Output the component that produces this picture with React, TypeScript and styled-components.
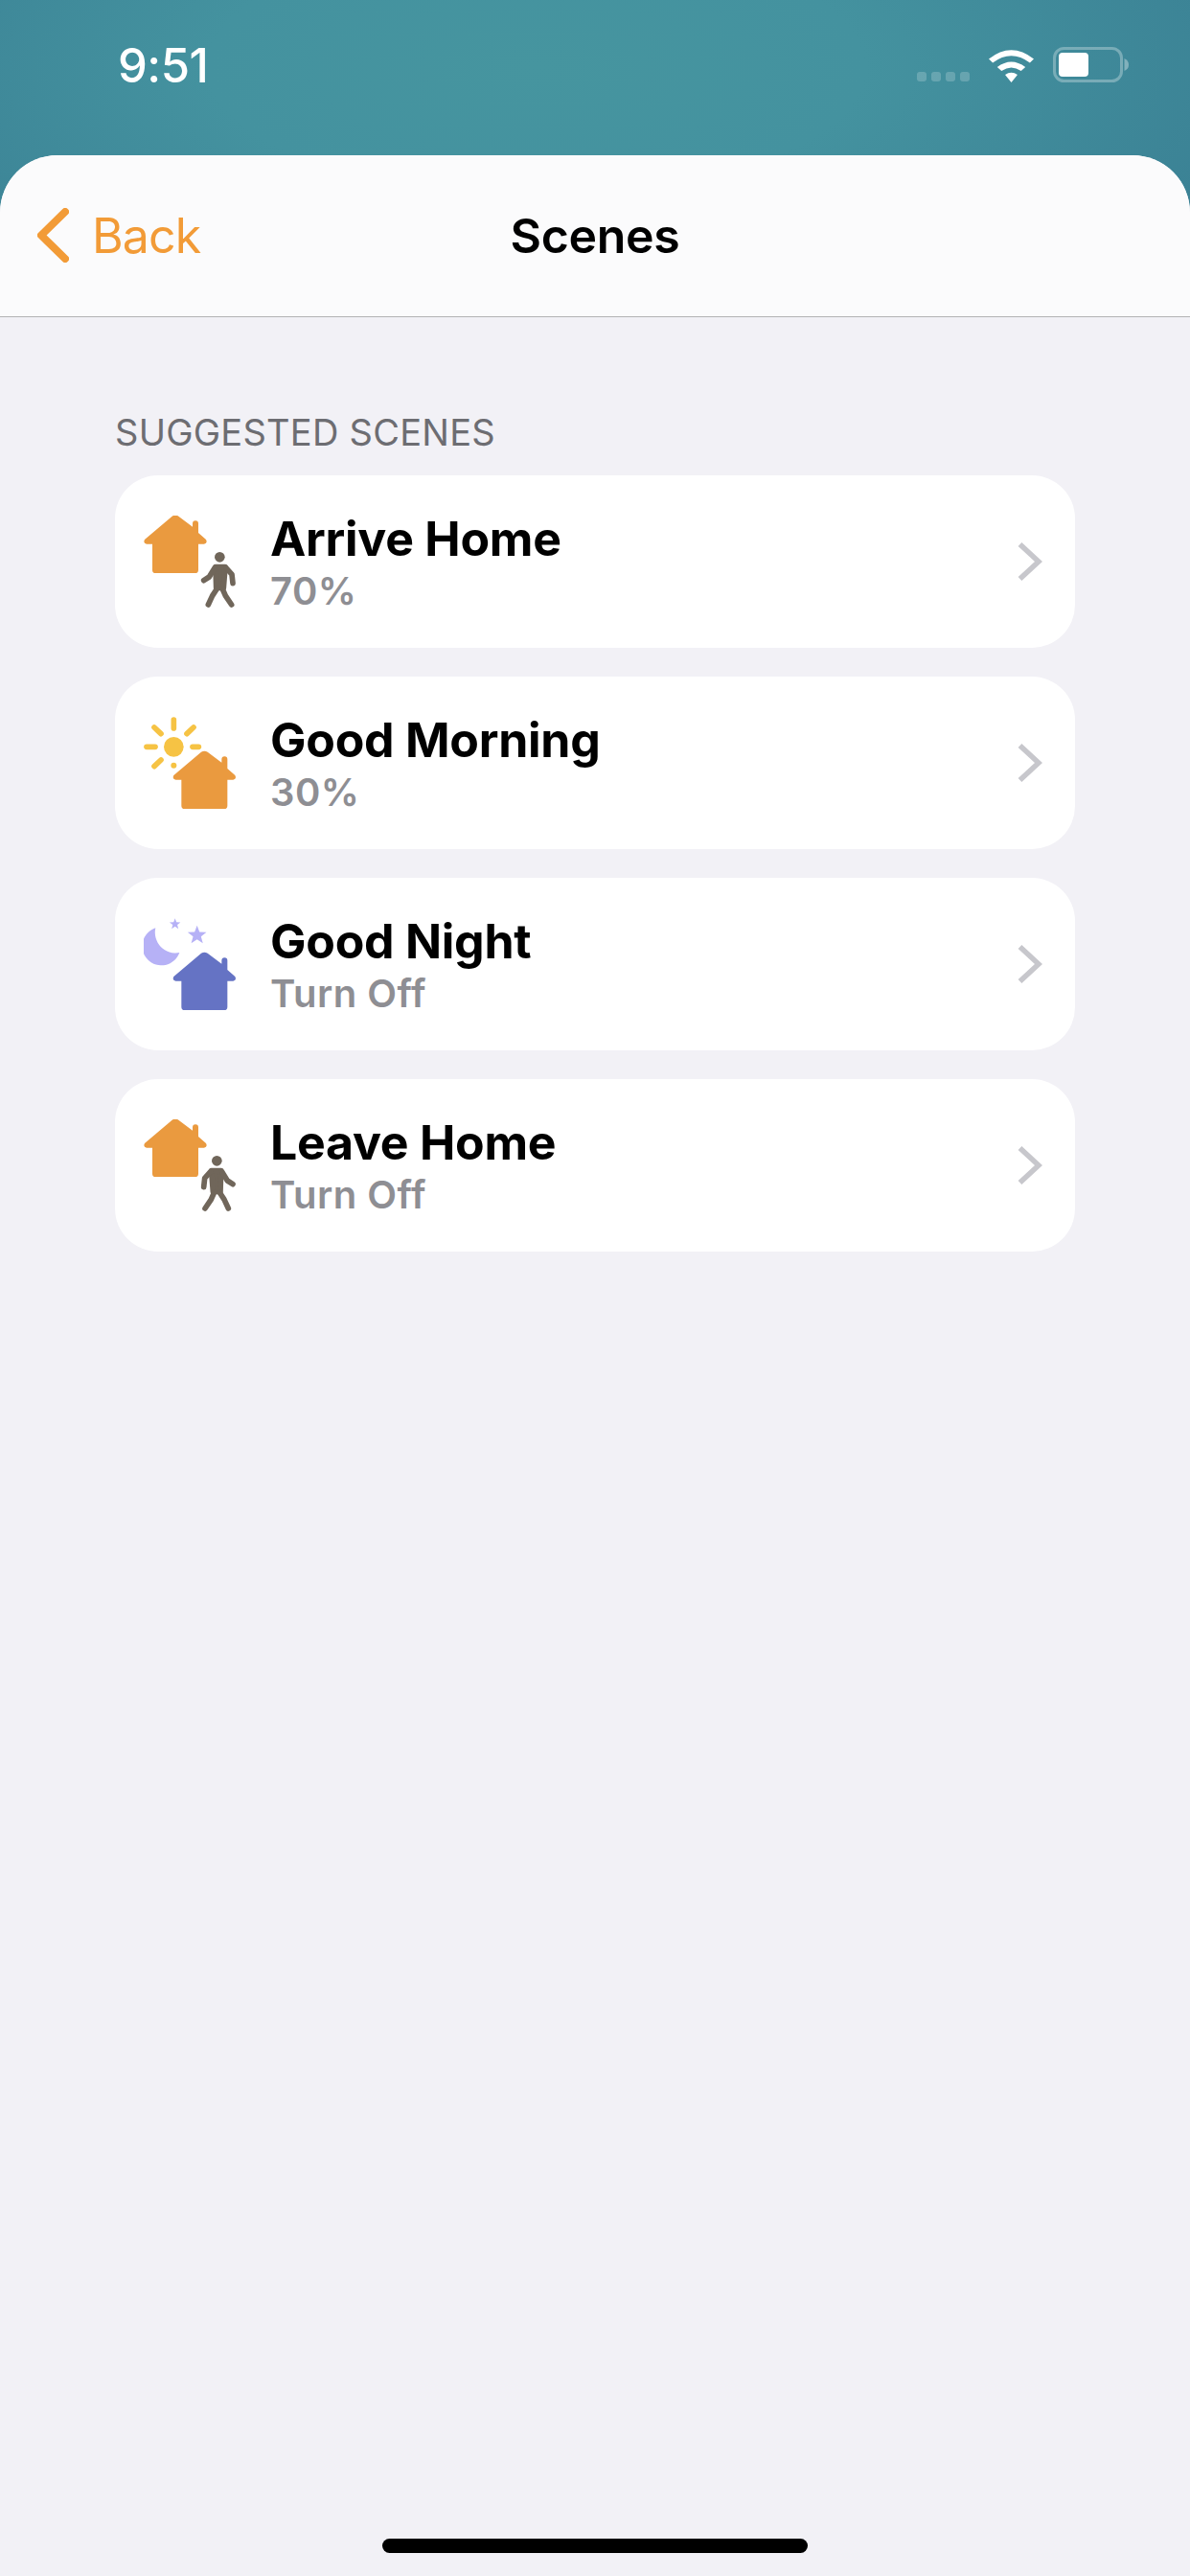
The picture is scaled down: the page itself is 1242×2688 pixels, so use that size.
import React from "react";
import styled, { createGlobalStyle } from "styled-components";

const Global = createGlobalStyle`
  html, body { margin: 0; padding: 0; background: #f2f1f6; }
  * { box-sizing: border-box; }
`;

const Page = styled.div`
  width: 1242px;
  height: 2688px;
  display: flex;
  flex-direction: column;
  font-family: Inter, "Noto Sans", sans-serif;
  background:
    radial-gradient(ellipse 760px 300px at 560px 70px, #46959f 0%, #44929f 45%, #3b8295 100%) top / 1242px 240px no-repeat,
    #f2f1f6;
`;

const StatusBar = styled.div`
  height: 162px;
  flex: none;
  display: flex;
  justify-content: space-between;
  align-items: flex-start;
  padding: 40px 64px 0 123px;
  color: #fff;
`;

const Clock = styled.span`
  font-size: 49px;
  font-weight: 500;
  line-height: 58px;
  letter-spacing: -0.5px;
`;

const StatusIcons = styled.div`
  display: flex;
  align-items: flex-end;
  gap: 20px;
  padding-top: 9px;
`;

const CellDots = styled.div`
  display: flex;
  gap: 5px;
  margin-bottom: 1px;
`;

const CellDot = styled.i`
  width: 10px;
  height: 10px;
  border-radius: 3px;
  background: rgba(255, 255, 255, 0.2);
`;

const Sheet = styled.main`
  flex: 1;
  display: flex;
  flex-direction: column;
  background: #f2f1f6;
  border-radius: 60px 60px 0 0;
`;

const NavBar = styled.header`
  height: 169px;
  flex: none;
  display: grid;
  grid-template-columns: 1fr auto 1fr;
  align-items: center;
  padding: 0 39px 1px;
  background: #fbfbfc;
  border-radius: 60px 60px 0 0;
  border-bottom: 1.5px solid #b2b2b4;
`;

const BackLink = styled.a`
  display: flex;
  align-items: center;
  gap: 24px;
  color: #f29b37;
  font-size: 50px;
  font-weight: 400;
  letter-spacing: -0.9px;
`;

const NavTitle = styled.h1`
  margin: 0;
  color: #000;
  font-size: 50px;
  font-weight: 600;
  letter-spacing: -0.3px;
`;

const Content = styled.section`
  flex: 1;
  display: flex;
  flex-direction: column;
  padding: 96px 120px 0;
`;

const SectionLabel = styled.h2`
  margin: 0 0 21px;
  color: #6d6d72;
  font-size: 38px;
  line-height: 48px;
  font-weight: 400;
  letter-spacing: 0.25px;
`;

const SceneList = styled.ul`
  list-style: none;
  margin: 0;
  padding: 0;
  display: flex;
  flex-direction: column;
  gap: 30px;
`;

const SceneCard = styled.li`
  height: 180px;
  display: flex;
  align-items: center;
  gap: 36px;
  padding: 0 34px 0 30px;
  background: #fff;
  border-radius: 45px;
`;

const SceneText = styled.div`
  flex: 1;
  display: flex;
  flex-direction: column;
  gap: 3px;
  padding-top: 3px;
`;

const SceneName = styled.span`
  color: #000;
  font-size: 50px;
  line-height: 56px;
  font-weight: 700;
  letter-spacing: -0.25px;
`;

const SceneState = styled.span`
  color: #8e8e93;
  font-size: 40px;
  line-height: 48px;
  font-weight: 600;
  letter-spacing: 0.5px;
`;

const HomeBar = styled.div`
  width: 444px;
  height: 15px;
  flex: none;
  align-self: center;
  margin-bottom: 24px;
  border-radius: 8px;
  background: #000;
`;

/* All scene artwork shares a 288-unit canvas, shown at 96px. */
const ORANGE = "#ea9a3f";
const INDIGO = "#6573c4";
const SUN = "#f6c344";
const MOON = "#b6b1f6";
const WALKER = "#70665a";

const House = ({ x, y, fill }: { x: number; y: number; fill: string }) => (
  <path
    transform={`translate(${x} ${y})`}
    fill={fill}
    d="M89 3 Q99 -3 109 3 L153 36 V26 Q153 17 162 17 Q171 17 171 26 V55 L195 76 Q201 88 189 90 H171 V171 Q171 181 161 181 H37 Q27 181 27 171 V90 H9 Q-3 88 3 76 Z"
  />
);

const Walker = ({ mirrored }: { mirrored?: boolean }) => (
  <g
    transform={mirrored ? "translate(707 0) scale(-1 1)" : undefined}
    stroke={WALKER}
    strokeWidth="17"
    strokeLinecap="round"
    strokeLinejoin="round"
    fill="none"
  >
    <circle cx="358" cy="274" r="16" fill={WALKER} stroke="none" />
    <path d="M345 305 H375 L370 370 H347 Z" fill={WALKER} />
    <path d="M342 308 L325 336 L308 347" />
    <path d="M378 308 L396 328 L399 356" />
    <path d="M350 372 L335 395 L322 423" />
    <path d="M366 372 L376 395 L395 423" />
  </g>
);

const Star = ({ cx, cy, r }: { cx: number; cy: number; r: number }) => {
  const points = Array.from({ length: 10 }, (_, i) => {
    const radius = i % 2 === 0 ? r : r * 0.42;
    const angle = -Math.PI / 2 + (i * Math.PI) / 5;
    return `${cx + radius * Math.cos(angle)},${cy + radius * Math.sin(angle)}`;
  }).join(" ");
  return <polygon points={points} fill={MOON} />;
};

const SceneArt = styled.svg.attrs({ viewBox: "120 144 288 288", width: 96, height: 96 })`
  flex: none;
`;

const ArriveArt = () => (
  <SceneArt>
    <House x={120} y={143} fill={ORANGE} />
    <Walker />
  </SceneArt>
);

const LeaveArt = () => (
  <SceneArt>
    <House x={120} y={143} fill={ORANGE} />
    <Walker mirrored />
  </SceneArt>
);

const MorningArt = () => (
  <SceneArt>
    <circle cx="214" cy="238" r="31" fill={SUN} />
    <circle cx="214" cy="296" r="9" fill={SUN} />
    <g stroke={SUN} strokeWidth="17" strokeLinecap="round">
      <path d="M214 153 V180" />
      <path d="M129 238 H156" />
      <path d="M273 238 H292" />
      <path d="M153 177 L174 197" />
      <path d="M276 177 L255 197" />
      <path d="M174 279 L153 299" />
    </g>
    <House x={211} y={251} fill={ORANGE} />
  </SceneArt>
);

const NightArt = () => (
  <SceneArt>
    <path d="M157 175 A60 60 0 1 0 232 252 A64 64 0 0 1 157 175 Z" fill={MOON} />
    <Star cx={218} cy={163} r={18} />
    <Star cx={287} cy={198} r={31} />
    <House x={211} y={251} fill={INDIGO} />
  </SceneArt>
);

const WifiIcon = () => (
  <svg width="47" height="36" viewBox="0 0 40 36" preserveAspectRatio="none">
    <path d="M0 11.5 Q20 -7 40 11.5 L36.5 15.5 Q20 1 3.5 15.5 Z" fill="#fff" />
    <path d="M7.5 20 Q20 9 32.5 20 L28.7 24 Q20 17 11.3 24 Z" fill="#fff" />
    <path d="M14.5 28 Q20 23.5 25.5 28 L20 36 Z" fill="#fff" />
  </svg>
);

const BatteryIcon = () => (
  <svg width="79" height="37" viewBox="0 0 79 37">
    <rect x="1.5" y="1.5" width="70" height="34" rx="10" fill="none" stroke="#fff" strokeOpacity="0.3" strokeWidth="3" />
    <rect x="6" y="6" width="31" height="25" rx="4" fill="#fff" />
    <path d="M74.500 12 Q79 14 79 18.500 Q79 23 74.500 25 Z" fill="#fff" fillOpacity="0.35" />
  </svg>
);

const BackChevron = () => (
  <svg width="33" height="57" viewBox="0 0 33 57">
    <path d="M29 4 L4 28.500 L29 53" fill="none" stroke="#f29b37" strokeWidth="8" strokeLinecap="round" strokeLinejoin="round" />
  </svg>
);

const RowChevron = () => (
  <svg width="26" height="40" viewBox="0 0 26 40">
    <path d="M2.500 2 L22 20 L2.500 38" fill="none" stroke="#c7c7cc" strokeWidth="5.500" />
  </svg>
);

const scenes = [
  { name: "Arrive Home", state: "70%", Art: ArriveArt },
  { name: "Good Morning", state: "30%", Art: MorningArt },
  { name: "Good Night", state: "Turn Off", Art: NightArt },
  { name: "Leave Home", state: "Turn Off", Art: LeaveArt },
];

export default function App() {
  return (
    <Page>
      <Global />
      <StatusBar>
        <Clock>9:51</Clock>
        <StatusIcons>
          <CellDots>
            <CellDot />
            <CellDot />
            <CellDot />
            <CellDot />
          </CellDots>
          <WifiIcon />
          <BatteryIcon />
        </StatusIcons>
      </StatusBar>
      <Sheet>
        <NavBar>
          <BackLink>
            <BackChevron />
            Back
          </BackLink>
          <NavTitle>Scenes</NavTitle>
          <span />
        </NavBar>
        <Content>
          <SectionLabel>SUGGESTED SCENES</SectionLabel>
          <SceneList>
            {scenes.map(({ name, state, Art }) => (
              <SceneCard key={name}>
                <Art />
                <SceneText>
                  <SceneName>{name}</SceneName>
                  <SceneState>{state}</SceneState>
                </SceneText>
                <RowChevron />
              </SceneCard>
            ))}
          </SceneList>
        </Content>
        <HomeBar />
      </Sheet>
    </Page>
  );
}
